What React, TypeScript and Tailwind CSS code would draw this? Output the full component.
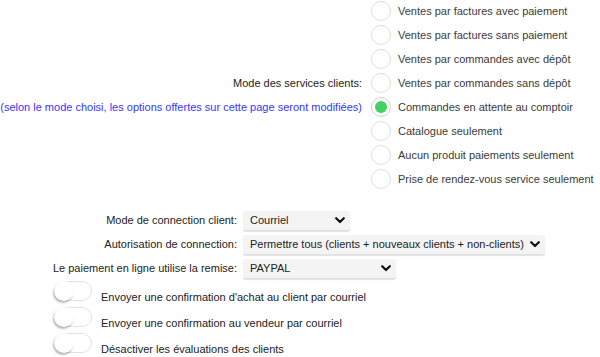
import React from "react";

const radios = [
  "Ventes par factures avec paiement",
  "Ventes par factures sans paiement",
  "Ventes par commandes avec dépôt",
  "Ventes par commandes sans dépôt",
  "Commandes en attente au comptoir",
  "Catalogue seulement",
  "Aucun produit paiements seulement",
  "Prise de rendez-vous service seulement",
];

function Chevron() {
  return (
    <svg width="10" height="7" viewBox="0 0 10 7" className="shrink-0">
      <path d="M1.2 1.2 L5 5 L8.8 1.2" fill="none" stroke="#111" strokeWidth="2.2" strokeLinecap="round" strokeLinejoin="round" />
    </svg>
  );
}

function Select({ value, w }: { value: string; w: string }) {
  return (
    <div
      className={`${w} h-[19px] flex items-center justify-between gap-[6px] pl-[7px] pr-[5px] rounded-[3px] bg-[#f4f4f4] shadow-[0_2px_1px_rgba(0,0,0,0.12)] text-[#222] whitespace-nowrap`}
    >
      <span>{value}</span>
      <Chevron />
    </div>
  );
}

function Toggle() {
  return (
    <div className="relative w-[38px] h-[20px] rounded-full border border-[#e2e2e2] bg-white shrink-0">
      <div className="absolute left-[-1px] top-[-1px] w-[20px] h-[20px] rounded-full bg-white shadow-[-1px_2px_2px_rgba(0,0,0,0.28)]" />
    </div>
  );
}

export default function App() {
  return (
    <div className="w-[600px] h-[357px] bg-white overflow-hidden text-[11px] leading-[14px] text-[#333] font-['Liberation_Sans',Arial,sans-serif]">
      <div className="flex -mt-[1px]">
        <div className="w-[362px] flex flex-col justify-center items-end">
          <div className="h-[24px] flex items-center text-[#222] whitespace-nowrap">Mode des services clients:</div>
          <div className="h-[24px] flex items-center text-[#3535ff] whitespace-nowrap">
            (selon le mode choisi, les options offertes sur cette page seront modifiées)
          </div>
        </div>
        <div className="ml-[9px] flex flex-col">
          {radios.map((r, i) => (
            <div key={r} className="h-[24px] flex items-center gap-[7px] whitespace-nowrap">
              <div
                className={`w-[20px] h-[20px] rounded-full border flex items-center justify-center bg-white shrink-0 ${
                  i === 4 ? "border-[#d0d0d0]" : "border-[#dedede]"
                }`}
              >
                {i === 4 && <div className="w-[12px] h-[12px] rounded-full bg-[#45d162]" />}
              </div>
              <span className="text-[#3a3a3a]">{r}</span>
            </div>
          ))}
        </div>
      </div>

      <div className="mt-[17px] grid grid-cols-[237px_auto] gap-x-[6px] auto-rows-[24px] items-center text-[#222]">
        <div className="text-right whitespace-nowrap">Mode de connection client:</div>
        <div><Select value="Courriel" w="w-[107px]" /></div>
        <div className="text-right whitespace-nowrap">Autorisation de connection:</div>
        <div><Select value="Permettre tous (clients + nouveaux clients + non-clients)" w="w-[302px]" /></div>
        <div className="text-right whitespace-nowrap">Le paiement en ligne utilise la remise:</div>
        <div><Select value="PAYPAL" w="w-[153px]" /></div>
      </div>

      <div className="mt-[1px] pl-[54px] flex flex-col text-[#222]">
        {[
          "Envoyer une confirmation d'achat au client par courriel",
          "Envoyer une confirmation au vendeur par courriel",
          "Désactiver les évaluations des clients",
        ].map((t) => (
          <div key={t} className="h-[26px] flex items-start gap-[9px]">
            <Toggle />
            <span className="mt-[9px] whitespace-nowrap">{t}</span>
          </div>
        ))}
      </div>
    </div>
  );
}
